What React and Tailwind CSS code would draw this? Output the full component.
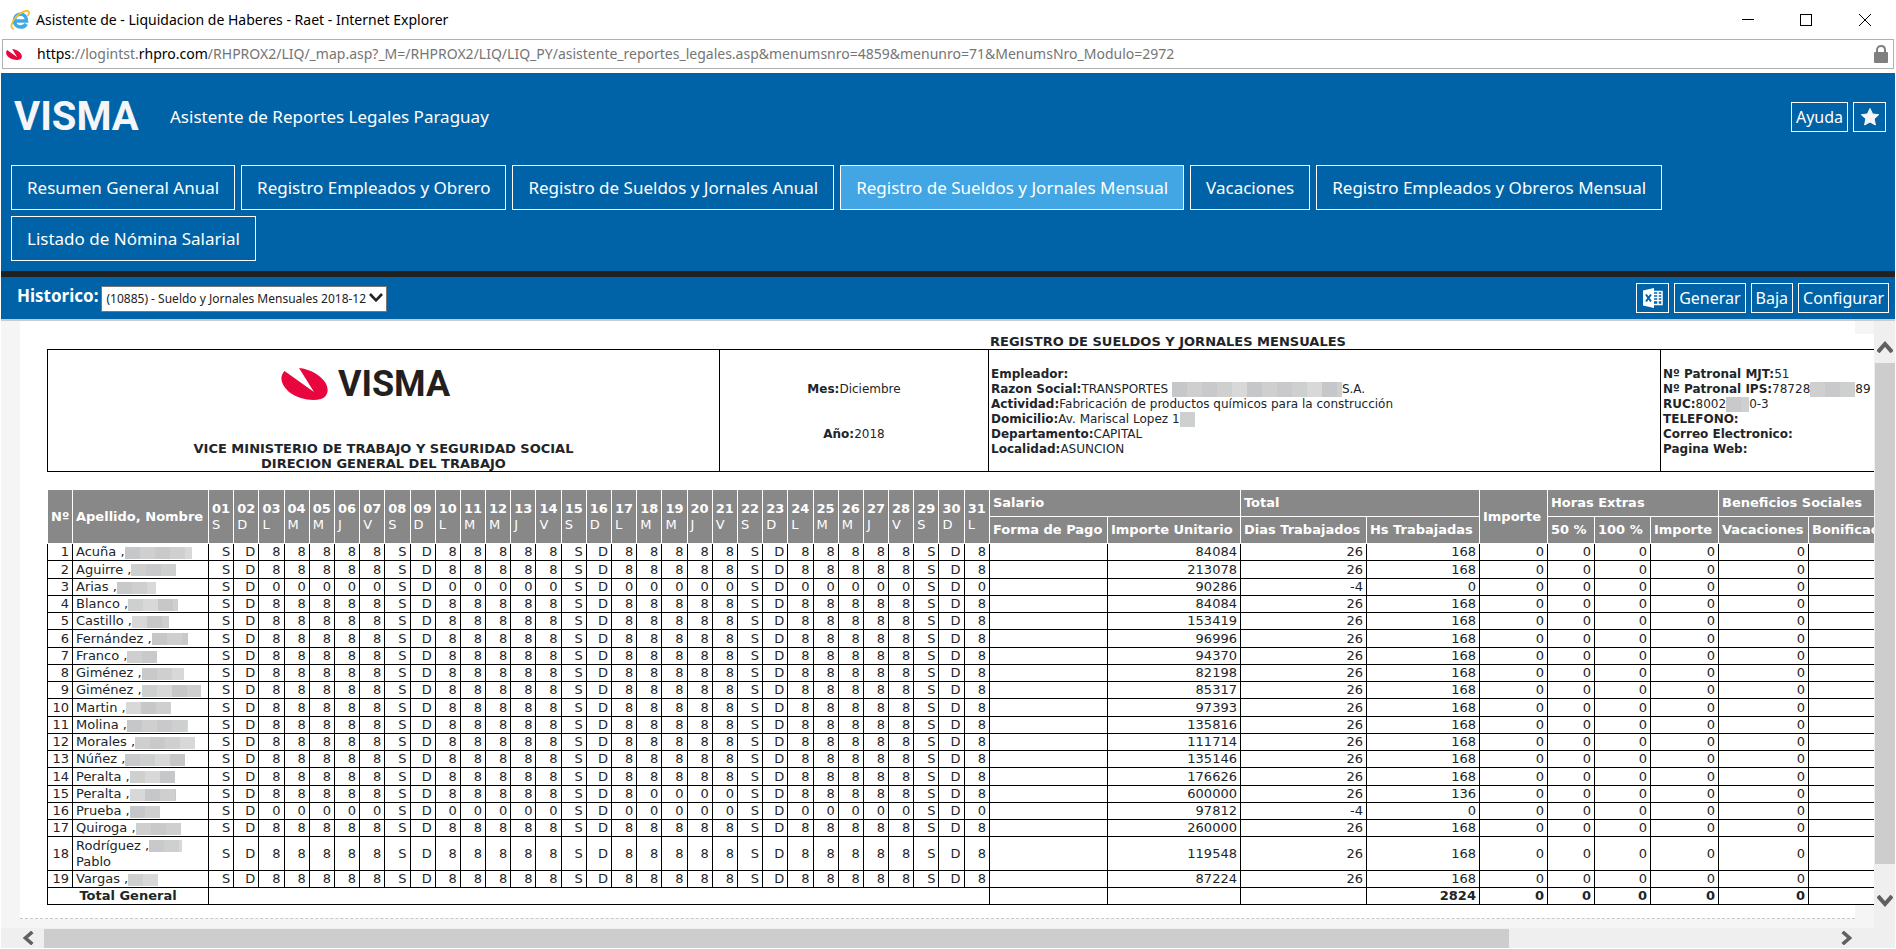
import React from "react";

const tabs = [
  "Resumen General Anual",
  "Registro Empleados y Obrero",
  "Registro de Sueldos y Jornales Anual",
  "Registro de Sueldos y Jornales Mensual",
  "Vacaciones",
  "Registro Empleados y Obreros Mensual",
  "Listado de Nómina Salarial",
];

// day letters of December 2018, starting on Saturday
const weekDays = ["S", "D", "L", "M", "M", "J", "V"];
const days = Array.from({ length: 31 }, (_, i) => ({
  number: String(i + 1).padStart(2, "0"),
  letter: weekDays[i % 7],
}));

// hidden = width of the masked first name
const employees = [
  { name: "Acuña", hidden: 67, amount: 84084, worked: 26, hours: 168 },
  { name: "Aguirre", hidden: 45, amount: 213078, worked: 26, hours: 168 },
  { name: "Arias", hidden: 39, amount: 90286, worked: -4, hours: 0, absent: "all" },
  { name: "Blanco", hidden: 50, amount: 84084, worked: 26, hours: 168 },
  { name: "Castillo", hidden: 37, amount: 153419, worked: 26, hours: 168 },
  { name: "Fernández", hidden: 36, amount: 96996, worked: 26, hours: 168 },
  { name: "Franco", hidden: 30, amount: 94370, worked: 26, hours: 168 },
  { name: "Giménez", hidden: 42, amount: 82198, worked: 26, hours: 168 },
  { name: "Giménez", hidden: 59, amount: 85317, worked: 26, hours: 168 },
  { name: "Martin", hidden: 45, amount: 97393, worked: 26, hours: 168 },
  { name: "Molina", hidden: 61, amount: 135816, worked: 26, hours: 168 },
  { name: "Morales", hidden: 60, amount: 111714, worked: 26, hours: 168 },
  { name: "Núñez", hidden: 60, amount: 135146, worked: 26, hours: 168 },
  { name: "Peralta", hidden: 45, amount: 176626, worked: 26, hours: 168 },
  { name: "Peralta", hidden: 46, amount: 600000, worked: 26, hours: 136, absent: [18, 19, 20, 21] },
  { name: "Prueba", hidden: 30, amount: 97812, worked: -4, hours: 0, absent: "all" },
  { name: "Quiroga", hidden: 45, amount: 260000, worked: 26, hours: 168 },
  { name: "Rodríguez", second: "Pablo", hidden: 33, amount: 119548, worked: 26, hours: 168 },
  { name: "Vargas", hidden: 30, amount: 87224, worked: 26, hours: 168 },
];

function dayValue(employee, index) {
  const letter = weekDays[index % 7];
  if (letter === "S" || letter === "D") return letter;
  if (employee.absent === "all") return 0;
  if (employee.absent && employee.absent.includes(index + 1)) return 0;
  return 8;
}

const maskColors = ["#c6c7c9", "#cfcfd0", "#c9c8ca", "#cecfcf", "#d8d8d8"];

function Masked({ width, seed = 0, tall }) {
  const count = Math.ceil(width / 15);
  return (
    <span
      className={
        tall
          ? "inline-flex h-[15px] overflow-hidden align-middle"
          : "inline-flex h-[12px] overflow-hidden align-middle"
      }
      style={{ width }}
    >
      {Array.from({ length: count }, (_, i) => (
        <span
          key={i}
          className="h-full w-[15px] shrink-0"
          style={{ backgroundColor: maskColors[(i + seed) % maskColors.length] }}
        />
      ))}
    </span>
  );
}

function Swoosh({ className }) {
  return (
    <svg viewBox="0 0 47 32" className={className} aria-hidden="true">
      <path
        fill="#e8063f"
        d="M3.5 3 C-2 9 0 17 8 24 C17 31 31 33.500 40 31 C48 28 48 20 44 14 C39 7 29 1 18 0 L33 24 Z"
      />
    </svg>
  );
}

function ExplorerIcon() {
  return (
    <svg viewBox="0 0 20 20" className="h-5 w-5" aria-hidden="true">
      <path
        fill="none"
        stroke="#3fa9e8"
        strokeWidth="3.600"
        d="M4.500 11 H16.500 C16.500 6.500 14 4.200 10.600 4.200 C7 4.200 4.400 7 4.400 10.800 C4.400 14.600 7 17 10.600 17 C13 17 15 16 16.200 14"
      />
      <path
        fill="none"
        stroke="#f3c02c"
        strokeWidth="1.800"
        strokeLinecap="round"
        d="M3 18.800 C0 17.500 1.500 12 6 7 C11 2 17 -0.500 18.600 1.600 C19.300 2.600 18.900 4 18.200 5.400"
      />
    </svg>
  );
}

function TitleBar() {
  return (
    <div className="flex h-[39px] items-center justify-between pl-[9px]">
      <div className="flex items-center gap-[6px]">
        <ExplorerIcon />
        <span className="text-sm text-black">
          Asistente de - Liquidacion de Haberes - Raet - Internet Explorer
        </span>
      </div>
      <div className="flex items-center">
        <button aria-label="Minimizar" className="flex h-[38px] w-[58px] items-center justify-center">
          <svg width="12" height="12" aria-hidden="true">
            <path d="M0 5.500 H12" stroke="#000" />
          </svg>
        </button>
        <button aria-label="Maximizar" className="flex h-[38px] w-[58px] items-center justify-center">
          <svg width="12" height="12" aria-hidden="true">
            <rect x="0.500" y="0.500" width="11" height="11" fill="none" stroke="#000" />
          </svg>
        </button>
        <button aria-label="Cerrar" className="flex h-[38px] w-[60px] items-center justify-center">
          <svg width="12" height="12" aria-hidden="true">
            <path d="M0 0 L12 12 M12 0 L0 12" stroke="#000" />
          </svg>
        </button>
      </div>
    </div>
  );
}

function AddressBar() {
  return (
    <div className="mx-px flex h-[30px] items-center border border-[#b0b0b0] pr-[5px] pl-[3px]">
      <Swoosh className="h-[11px] w-4" />
      <div className="ml-[15px] flex-1 text-sm text-[#757575]">
        <span className="text-black">https</span>://logintst.
        <span className="text-black">rhpro.com</span>
        /RHPROX2/LIQ/_map.asp?_M=/RHPROX2/LIQ/LIQ_PY/asistente_reportes_legales.asp&amp;menumsnro=4859&amp;menunro=71&amp;MenumsNro_Modulo=2972
      </div>
      <svg viewBox="0 0 14 18" className="h-[18px] w-[14px]" aria-hidden="true">
        <rect x="0" y="7" width="14" height="11" rx="1" fill="#7f7f7f" />
        <path d="M3 8 V5 C3 -0.300 11 -0.300 11 5 V8" fill="none" stroke="#7f7f7f" strokeWidth="2" />
      </svg>
    </div>
  );
}

function ToolButton({ children, label }) {
  return (
    <button
      aria-label={label}
      className="flex h-[30px] items-center justify-center border border-white px-1 text-base leading-5 text-white"
    >
      {children}
    </button>
  );
}

function Header() {
  return (
    <header className="bg-[#0063a7] pt-[26px] pr-[9px] pb-[10px] pl-[10px]">
      <div className="flex h-9 items-center">
        <span className="w-[156px] pl-[3px] font-['Roboto',sans-serif] text-[40px] leading-9 font-bold text-[#f5f5f7]">
          VISMA
        </span>
        <h1 className="flex-1 pl-[3px] text-[17px] leading-6 text-white">
          Asistente de Reportes Legales Paraguay
        </h1>
        <div className="flex gap-[5px]">
          <ToolButton>Ayuda</ToolButton>
          <button
            aria-label="Favorito"
            className="flex h-[30px] w-[33px] items-center justify-center border border-white"
          >
            <svg viewBox="0 0 20 20" className="h-5 w-5" aria-hidden="true">
              <path
                fill="#f5f5f7"
                stroke="#f5f5f7"
                strokeLinejoin="round"
                d="M10 1.500 L12.600 7 L18.700 7.700 L14.200 11.800 L15.400 18 L10 15 L4.600 18 L5.800 11.800 L1.300 7.700 L7.400 7 Z"
              />
            </svg>
          </button>
        </div>
      </div>
      <nav className="mt-[30px] flex flex-wrap gap-x-[6px] gap-y-[6px]">
        {tabs.map((tab) => (
          <button
            key={tab}
            className={
              tab === "Registro de Sueldos y Jornales Mensual"
                ? "h-[45px] border border-white bg-[#41a6e3] px-[15px] text-[17px] leading-6 text-white"
                : "h-[45px] border border-white px-[15px] text-[17px] leading-6 text-white"
            }
          >
            {tab}
          </button>
        ))}
      </nav>
    </header>
  );
}

function Toolbar() {
  return (
    <div className="flex h-12 items-center justify-between border-t-[6px] border-[#212121] bg-[#0063a7] pr-[6px] pl-4">
      <div className="flex items-center gap-[3px]">
        <label htmlFor="historico" className="pb-1 text-[17px] leading-6 font-bold text-white">
          Historico:
        </label>
        <div className="relative">
          <select
            id="historico"
            className="h-[26px] w-[286px] appearance-none border border-[#767676] bg-white pl-1 text-xs text-[#222]"
          >
            <option>(10885) - Sueldo y Jornales Mensuales 2018-12</option>
          </select>
          <svg
            viewBox="0 0 14 9"
            className="pointer-events-none absolute top-2 right-1 h-[9px] w-[14px]"
            aria-hidden="true"
          >
            <path d="M1 1 L7 7.300 L13 1" fill="none" stroke="#222" strokeWidth="2.600" />
          </svg>
        </div>
      </div>
      <div className="flex gap-[5px]">
        <ToolButton label="Exportar a Excel">
          <svg viewBox="0 0 23 20" className="h-5 w-[23px]" aria-hidden="true">
            <path fill="#fff" d="M2 2.500 L13 0 V20 L2 17.500 Z" />
            <path
              d="M13 3.500 H21 V16.500 H13 M13 6.500 H21 M13 9.500 H21 M13 12.500 H21 M17 3 V17"
              fill="none"
              stroke="#fff"
              strokeWidth="1.500"
            />
            <path d="M5 6.500 L10 13.500 M10 6.500 L5 13.500" stroke="#0063a7" strokeWidth="2" />
          </svg>
        </ToolButton>
        <ToolButton>Generar</ToolButton>
        <ToolButton>Baja</ToolButton>
        <ToolButton>Configurar</ToolButton>
      </div>
    </div>
  );
}

function ReportHeader() {
  return (
    <div>
      <h2 className="h-[15px] text-center text-[13px] leading-[15px] font-bold">
        REGISTRO DE SUELDOS Y JORNALES MENSUALES
      </h2>
      <div className="grid h-[123px] grid-cols-[672px_269px_672px_1fr] divide-x divide-black border border-black text-xs leading-[15px]">
        <div className="flex flex-col items-center justify-between pt-[18px]">
          <div className="flex items-center gap-[10px] pr-9">
            <Swoosh className="h-8 w-[47px]" />
            <span className="font-['Roboto',sans-serif] text-[36px] leading-8 font-bold text-[#231f20]">
              VISMA
            </span>
          </div>
          <div className="text-center text-[13px] font-bold">
            <p>VICE MINISTERIO DE TRABAJO Y SEGURIDAD SOCIAL</p>
            <p>DIRECION GENERAL DEL TRABAJO</p>
          </div>
        </div>
        <div className="flex flex-col items-center justify-center gap-[30px] pt-[2px]">
          <p><b>Mes:</b>Diciembre</p>
          <p><b>Año:</b>2018</p>
        </div>
        <div className="flex flex-col justify-center pt-[2px] pl-[2px]">
          <p><b>Empleador:</b></p>
          <p className="flex items-center">
            <b>Razon Social:</b>TRANSPORTES&nbsp;<Masked width={170} tall />S.A.
          </p>
          <p><b>Actividad:</b>Fabricación de productos químicos para la construcción</p>
          <p className="flex items-center">
            <b>Domicilio:</b>Av. Mariscal Lopez 1<Masked width={15} seed={3} tall />
          </p>
          <p><b>Departamento:</b>CAPITAL</p>
          <p><b>Localidad:</b>ASUNCION</p>
        </div>
        <div className="flex flex-col justify-center pt-[2px] pl-[2px]">
          <p><b>Nº Patronal MJT:</b>51</p>
          <p className="flex items-center">
            <b>Nº Patronal IPS:</b>78728<Masked width={45} seed={1} tall />89
          </p>
          <p className="flex items-center">
            <b>RUC:</b>8002<Masked width={23} seed={2} tall />0-3
          </p>
          <p><b>TELEFONO:</b></p>
          <p><b>Correo Electronico:</b></p>
          <p><b>Pagina Web:</b></p>
        </div>
      </div>
    </div>
  );
}

function PayrollTable() {
  return (
    <table className="mt-[17px] w-full table-fixed border-collapse text-[13px] leading-4 [&_td]:border [&_td]:border-black [&_td]:px-[3px] [&_td]:py-0 [&_td]:text-right [&_th]:border [&_th]:border-white [&_th]:bg-[#888] [&_th]:px-[3px] [&_th]:py-0 [&_th]:text-left [&_th]:whitespace-nowrap [&_th]:text-white">
      <colgroup>
        <col className="w-[25px]" />
        <col className="w-[136px]" />
        {days.map((day) => (
          <col key={day.number} />
        ))}
        <col className="w-[118px]" />
        <col className="w-[133px]" />
        <col className="w-[126px]" />
        <col className="w-[113px]" />
        <col className="w-[68px]" />
        <col className="w-[47px]" />
        <col className="w-[56px]" />
        <col className="w-[68px]" />
        <col className="w-[90px]" />
        <col className="w-[480px]" />
      </colgroup>
      <thead>
        <tr className="h-[27px]">
          <th rowSpan={2}>Nº</th>
          <th rowSpan={2}>Apellido, Nombre</th>
          {days.map((day) => (
            <th key={day.number} rowSpan={2}>
              {day.number}
              <span className="block font-normal">{day.letter}</span>
            </th>
          ))}
          <th colSpan={2}>Salario</th>
          <th colSpan={2}>Total</th>
          <th rowSpan={2}>Importe</th>
          <th colSpan={3}>Horas Extras</th>
          <th colSpan={2}>Beneficios Sociales</th>
        </tr>
        <tr className="h-[27px]">
          <th>Forma de Pago</th>
          <th>Importe Unitario</th>
          <th>Dias Trabajados</th>
          <th>Hs Trabajadas</th>
          <th>50 %</th>
          <th>100 %</th>
          <th>Importe</th>
          <th>Vacaciones</th>
          <th>Bonificaciones</th>
        </tr>
      </thead>
      <tbody>
        {employees.map((employee, i) => (
          <tr
            key={i}
            className={employee.second ? "h-[34px]" : i % 4 === 1 ? "h-[18px]" : "h-[17px]"}
          >
            <td>{i + 1}</td>
            <td>
              <div className="text-left whitespace-nowrap">
                {employee.name} ,<Masked width={employee.hidden} seed={i} />
                {employee.second && <span className="block">{employee.second}</span>}
              </div>
            </td>
            {days.map((day, d) => (
              <td key={day.number}>{dayValue(employee, d)}</td>
            ))}
            <td></td>
            <td>{employee.amount}</td>
            <td>{employee.worked}</td>
            <td>{employee.hours}</td>
            <td>0</td>
            <td>0</td>
            <td>0</td>
            <td>0</td>
            <td>0</td>
            <td></td>
          </tr>
        ))}
        <tr className="h-[17px] font-bold">
          <td colSpan={2}>
            <div className="text-center">Total General</div>
          </td>
          <td colSpan={31}></td>
          <td></td>
          <td></td>
          <td></td>
          <td>2824</td>
          <td>0</td>
          <td>0</td>
          <td>0</td>
          <td>0</td>
          <td>0</td>
          <td></td>
        </tr>
      </tbody>
    </table>
  );
}

function Arrow({ d, className }) {
  return (
    <svg viewBox="0 0 16 12" className={className} aria-hidden="true">
      <path d={d} fill="none" stroke="#606060" strokeWidth="4" />
    </svg>
  );
}

const UP = "M1 11 L8 3 L15 11";
const DOWN = "M1 1 L8 9 L15 1";

export default function App() {
  return (
    <div className="min-h-screen bg-white px-px font-['Noto_Sans','Open_Sans',sans-serif]">
      <TitleBar />
      <AddressBar />
      <div className="mt-1">
        <Header />
        <Toolbar />
      </div>
      <div className="flex border-t-2 border-[#cbcbcb]">
        <div className="min-w-0 flex-1">
          <main className="overflow-hidden bg-[#f5f5f5] pr-[19px] pb-[9px] pl-[19px] font-['DejaVu_Sans',sans-serif] text-[#212529]">
            <div className="border-b border-dashed border-[#c8c8c8] bg-white pt-[13px] pb-[13px] pl-[27px]">
              <div className="w-[2242px] bg-white">
                <ReportHeader />
                <PayrollTable />
              </div>
            </div>
          </main>
          <div className="flex h-[20px] items-center bg-[#efefef] pr-5 pl-5">
            <Arrow d={UP} className="h-3 w-[14px] -rotate-90" />
            <div className="mx-[9px] h-[19px] flex-1">
              <div className="h-full w-[82%] bg-[#cdcdcd]" />
            </div>
            <Arrow d={UP} className="h-3 w-[14px] rotate-90" />
          </div>
        </div>
        <div className="flex w-[21px] flex-col items-center bg-[#efefef] pt-5 pb-[41px]">
          <Arrow d={UP} className="h-3 w-4" />
          <div className="my-[10px] w-full flex-1 pl-px">
            <div className="h-[96%] bg-[#cdcdcd]" />
          </div>
          <Arrow d={DOWN} className="h-3 w-4" />
        </div>
      </div>
    </div>
  );
}
